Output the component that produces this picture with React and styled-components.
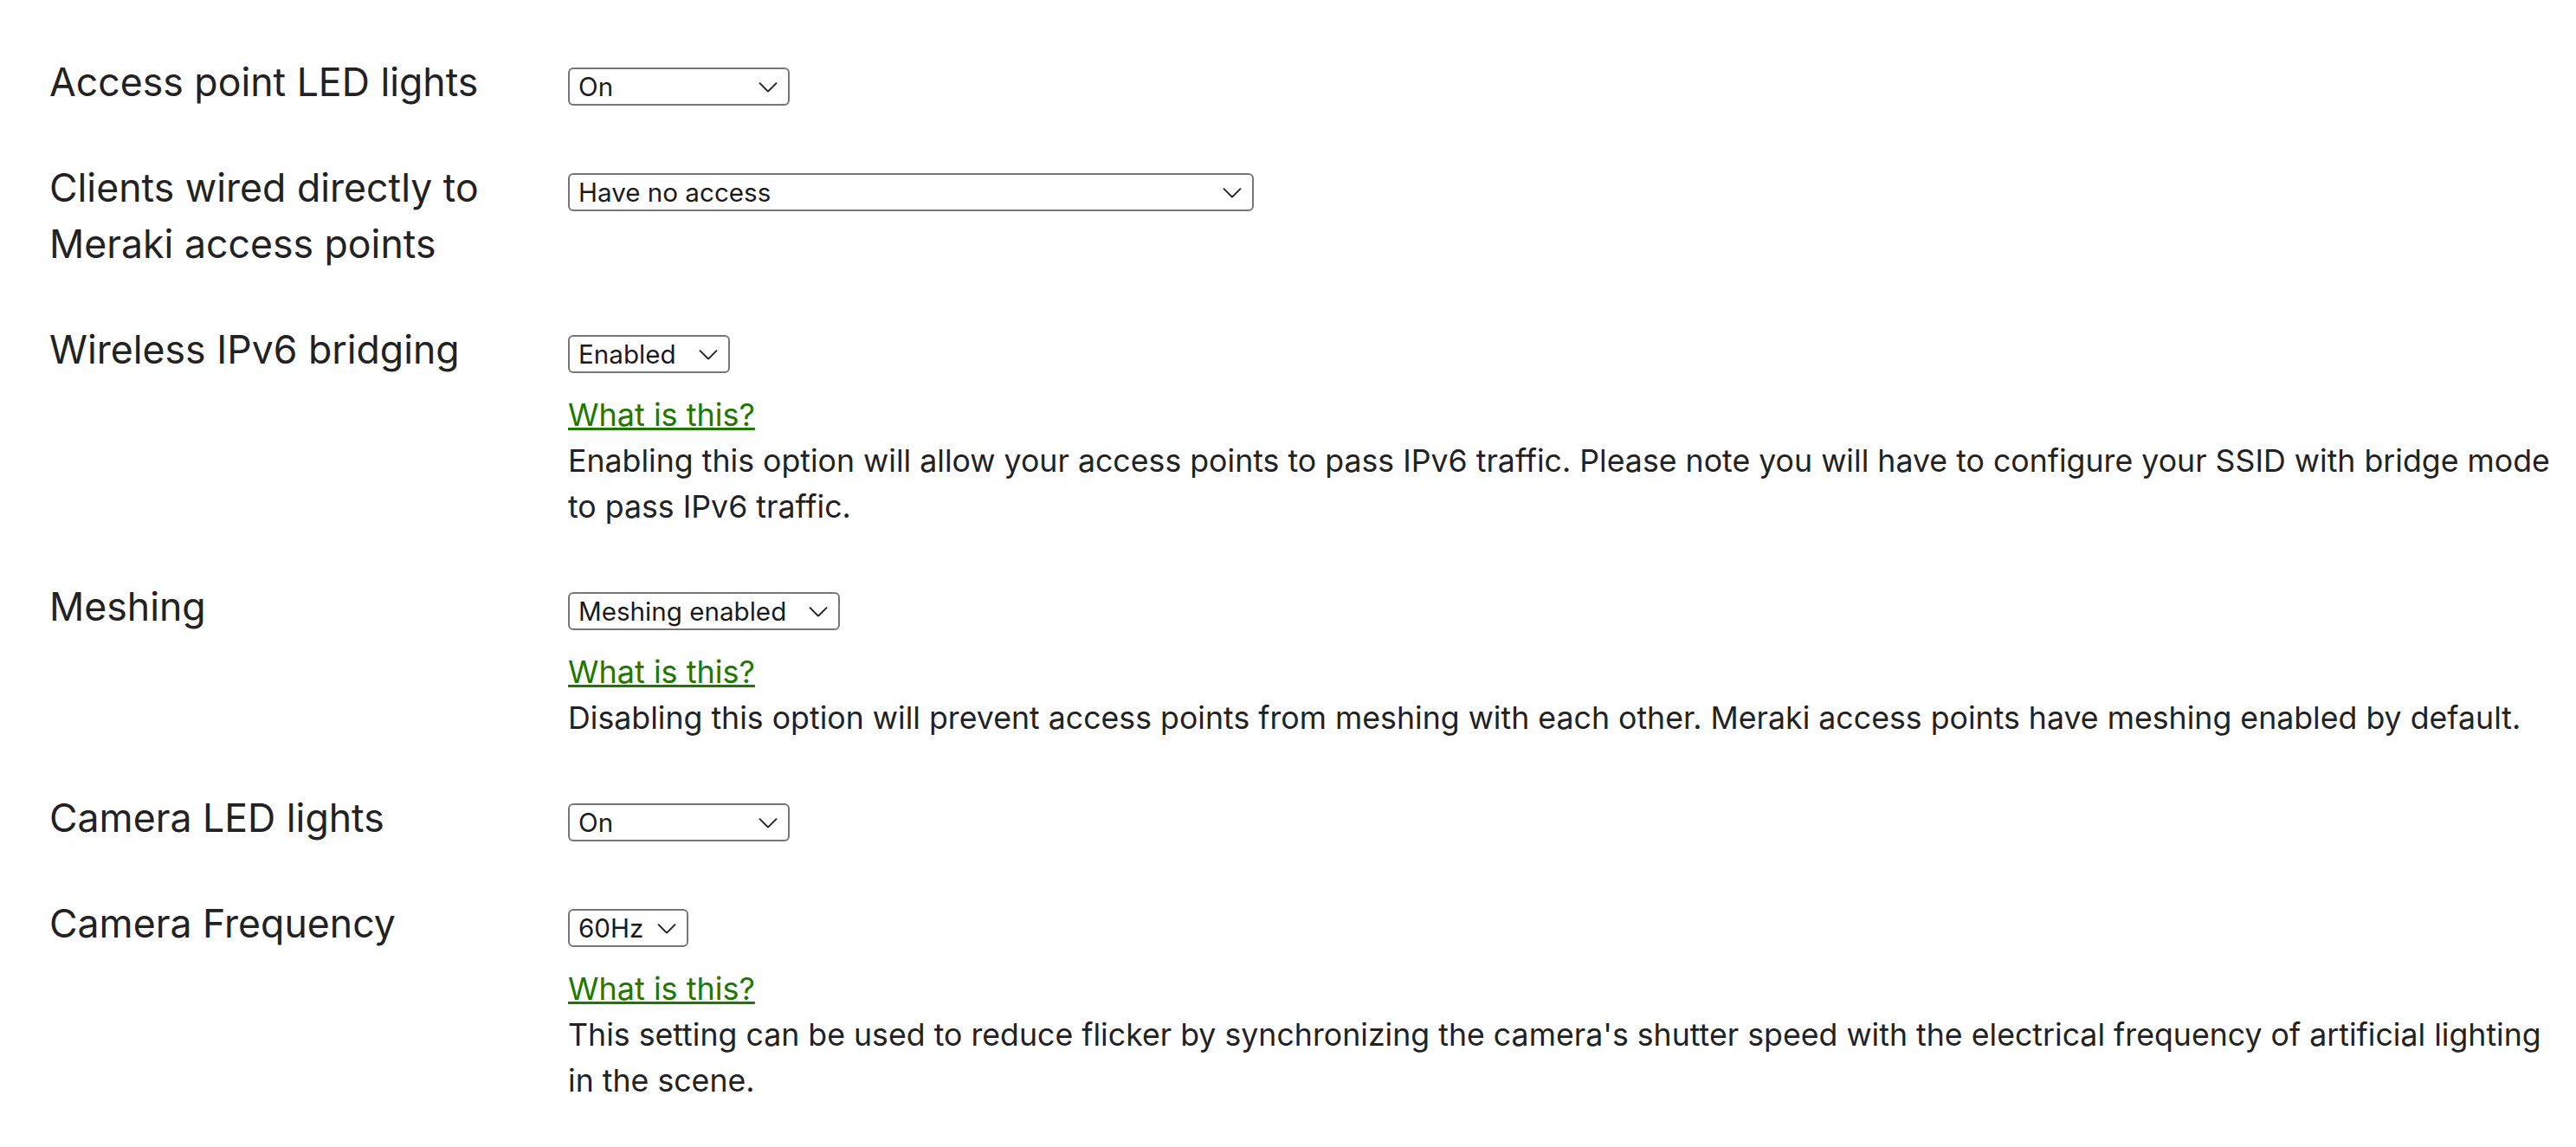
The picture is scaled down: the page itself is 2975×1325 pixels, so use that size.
import React from 'react';
import styled, { createGlobalStyle } from 'styled-components';

const GlobalStyle = createGlobalStyle`
  body {
    margin: 0;
    background: #ffffff;
    color: #222222;
    font-family: Inter, "Noto Sans", "Liberation Sans", sans-serif;
  }
`;

const settings = [
    { label: 'Access point LED lights', value: 'On', width: 256 },
    { label: 'Clients wired directly to Meraki access points', value: 'Have no access', width: 792 },
    {
        label: 'Wireless IPv6 bridging',
        value: 'Enabled',
        width: 187,
        help: 'Enabling this option will allow your access points to pass IPv6 traffic. Please note you will have to configure your SSID with bridge mode to pass IPv6 traffic.',
    },
    {
        label: 'Meshing',
        value: 'Meshing enabled',
        width: 314,
        help: 'Disabling this option will prevent access points from meshing with each other. Meraki access points have meshing enabled by default.',
    },
    { label: 'Camera LED lights', value: 'On', width: 256 },
    {
        label: 'Camera Frequency',
        value: '60Hz',
        width: 139,
        help: "This setting can be used to reduce flicker by synchronizing the camera's shutter speed with the electrical frequency of artificial lighting in the scene.",
    },
];

const Chevron = () => (
    <ChevronIcon width="22" height="12" viewBox="0 0 22 12">
        <polyline points="1,1 11,11 21,1" fill="none" stroke="#222" strokeWidth="2" />
    </ChevronIcon>
);

const Dropdown = ({ value, width }) => (
    <SelectWrap $width={width}>
        <NativeSelect defaultValue={value}>
            <option>{value}</option>
        </NativeSelect>
        <Chevron />
    </SelectWrap>
);

const App = () => {
    return (<Wrapper>
        <GlobalStyle />
        {settings.map((item) => (
            <Row key={item.label}>
                <Label>{item.label}</Label>
                <Control>
                    <Dropdown value={item.value} width={item.width} />
                    {item.help && (<>
                        <HelpLink href="#">What is this?</HelpLink>
                        <Help>{item.help}</Help>
                    </>)}
                </Control>
            </Row>
        ))}
    </Wrapper>);
};

const Wrapper = styled.main`
    display: flex;
    flex-direction: column;
    gap: 57px;
    padding: 63px 20px 40px 57px;
`;

const Row = styled.div`
    display: grid;
    grid-template-columns: 599px 1fr;
    align-items: start;
`;

const Label = styled.div`
    font-size: 44.6px;
    line-height: 65px;
    color: #222;
    padding-right: 20px;
`;

const Control = styled.div`
    display: flex;
    flex-direction: column;
    align-items: flex-start;
    padding-top: 15px;
`;

const SelectWrap = styled.div`
    position: relative;
    width: ${(p) => p.$width}px;
    height: 44px;
`;

const NativeSelect = styled.select`
    appearance: none;
    width: 100%;
    height: 100%;
    box-sizing: border-box;
    border: 2px solid #767676;
    border-radius: 6px;
    background: #fff;
    padding: 0 48px 0 10px;
    font-family: Inter, "Noto Sans", sans-serif;
    font-size: 29.6px;
    color: #1a1a1a;
    outline: none;
`;

const ChevronIcon = styled.svg`
    position: absolute;
    right: 14px;
    top: 50%;
    transform: translateY(-45%);
    pointer-events: none;
`;

const HelpLink = styled.a`
    margin-top: 22px;
    font-size: 36px;
    line-height: 53px;
    color: #1c7800;
    text-decoration: underline;
    text-decoration-thickness: 3px;
`;

const Help = styled.p`
    margin: 0;
    font-size: 35.7px;
    line-height: 53px;
    color: #222;
`;

export default App;
